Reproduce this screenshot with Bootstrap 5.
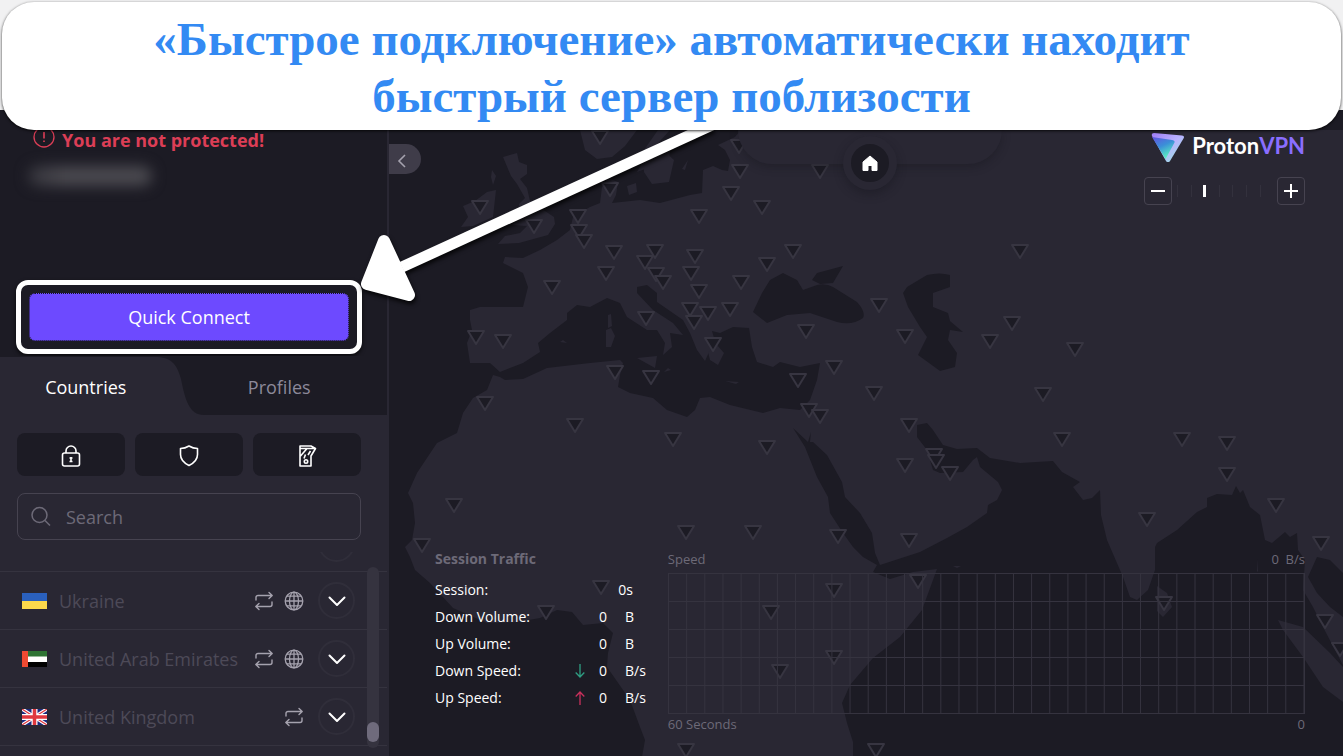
<!DOCTYPE html>
<html lang="ru">
<head>
<meta charset="utf-8">
<meta name="viewport" content="width=device-width, initial-scale=1">
<title>ProtonVPN</title>
<link href="https://cdn.jsdelivr.net/npm/bootstrap@5.3.0/dist/css/bootstrap.min.css" rel="stylesheet">
<style>
  :root { --sea:#1c1b24; --land:#292733; --line:#35333f; --muted:#6d6a78; --dim:#4d4a58; --accent:#6d4aff; }
  body { background:var(--sea); color:#fff; font-family:"Open Sans","Noto Sans",sans-serif; font-size:18px; line-height:24px; }
  .app-shell { padding-top:130px; }
  .backdrop { position:absolute; inset:0 0 auto 0; height:110px; background:#f1f1f2; }
  .callout { position:absolute; top:2px; left:2px; right:2px; padding:9px 24px 5px; border-radius:32px; background:#fff; color:#338af3;
    font:bold 47px/57px "Liberation Serif",serif; box-shadow:0 1px 3px rgba(0,0,0,.8); z-index:5; }
  .callout-arrow { position:absolute; left:340px; top:126px; z-index:4; filter:drop-shadow(1px 3px 2px rgba(0,0,0,.8)); }
  .side { width:389px; border-right:2px solid var(--land); background:var(--sea); }
  .side-pad { padding-left:17px; padding-right:26px; }
  .status-text { color:#dc3e56; font-weight:700; line-height:20px; padding-left:32px; gap:6px; }
  .ip-smudge { width:124px; height:20px; margin:16px 0 0 28px; border-radius:10px; background:linear-gradient(90deg,#35343c,#4b4a50 30%,#4b4a50); filter:blur(7px); }
  .quick-area { padding:94px 25px 0 16px; }
  .highlight-box { border:5px solid #fff; border-radius:12px; padding:8px; box-shadow:0 2px 4px rgba(0,0,0,.7); }
  .btn-quick { height:48px; border:1px dotted #15141c; border-radius:6px; background:var(--accent); color:#fff; font-size:18px; font-weight:500; }
  .btn-quick:hover { background:#7c5cff; color:#fff; }
  .tabs { height:59px; margin-top:2px; background:var(--sea); }
  .tab-shape { position:absolute; left:0; top:0; }
  .tab-link { color:#8c899a; background:none; border:0; padding:2px 22px 0 0; }
  .tab-link.active { color:#fff; }
  .panel-body { background:var(--land); padding-top:18px; }
  .filter-row { gap:10px; }
  .btn-filter { flex:1 1 0; height:43px; border:0; border-radius:8px; background:var(--sea); color:#fff; }
  .search-box { height:47px; margin:17px 26px 0 17px; padding:0 12px; gap:14px; border:1px solid #464350; border-radius:8px; color:var(--muted); }
  .search-box input { background:none; border:0; outline:0; color:#fff; min-width:0; }
  .search-box input::placeholder { color:var(--muted); opacity:1; }
  .server-list { margin-top:12px; }
  .server-row { height:58px; border-bottom:1px solid var(--line); padding:0 32px 0 22px; color:var(--dim); }
  .server-row.cut { height:20px; overflow:hidden; align-items:flex-end; padding-bottom:9px; }
  .server-row svg { color:#a5a2ae; flex:none; }
  .server-name { padding-left:12px; }
  .row-tools { gap:10px; margin-right:14px; }
  .btn-more { width:37px; height:37px; flex:none; border:2px solid #302e3a; border-radius:50%; background:none; padding:0; display:flex; align-items:center; justify-content:center; }
  .server-row .btn-more svg { color:#fff; }
  .scroll-track { position:absolute; top:15px; right:8px; width:12px; height:181px; border-radius:6px; background:#35333f; }
  .scroll-thumb { position:absolute; bottom:6px; width:12px; height:20px; border-radius:6px; background:#6f6b7c; }
  .map-area { background:var(--sea); overflow:hidden; padding-right:38px; }
  .world { position:absolute; left:0; top:-130px; width:100%; height:calc(100% + 130px); }
  .btn-collapse { position:absolute; left:-1px; top:14px; width:33px; height:30px; border:0; border-radius:0 15px 15px 0; background:#3f3c49; color:#a5a2ae; padding:0 6px 0 0; }
  .home-dock { position:absolute; left:calc(50% + 4px); top:0; width:264px; height:34px; margin-left:-132px; border-radius:0 0 40px 40px; background:var(--land); box-shadow:0 3px 8px rgba(20,19,27,.35); }
  .btn-home { position:absolute; left:50%; top:6px; width:54px; height:54px; margin-left:-27px; border:8px solid var(--land); border-radius:50%; background:var(--sea); padding:0; display:flex; align-items:center; justify-content:center; box-shadow:0 4px 10px rgba(20,19,27,.4); }
  .brand { font:bold 22px/32px Lato,sans-serif; color:#fff; }
  .brand span { color:#8a6eff; }
  .brand svg { margin-right:7px; }
  .zoom-bar { margin-top:15px; }
  .btn-zoom { width:28px; height:28px; border:1px solid #464350; border-radius:4px; background:none; color:#fff; padding:0; display:flex; align-items:center; justify-content:center; }
  .zoom-range { appearance:none; width:97px; height:12px; margin:0 4px; background:repeating-linear-gradient(90deg,transparent 0 1px,#33313d 1px 2px,transparent 2px calc(100%/7)); }
  .zoom-range::-webkit-slider-thumb { appearance:none; width:3px; height:12px; background:#fff; }
  .stats { font-size:14px; line-height:20px; }
  .stats-title { color:var(--muted); font-weight:700; margin-bottom:7px; }
  .session-table th { width:134px; font-weight:400; }
  .session-table td, .session-table th { height:27px; padding:0; }
  .arrow-cell { width:22px; }
  .session-table .num-cell { width:24px; text-align:center; }
  .session-table .unit-cell { padding-left:10px; }
  .session-table .time-cell { padding-right:13px; text-align:right; }
  .chart-text { color:var(--muted); font-size:13px; line-height:20px; }
  .chart-grid { height:141px; border-right:1px solid var(--line); border-bottom:1px solid var(--line);
    background-image:linear-gradient(90deg,var(--line) 1px,transparent 1px),linear-gradient(var(--line) 1px,transparent 1px);
    background-size:calc(100%/35) 100%,100% 28px; }
  .bottom-stats { padding:0 0 22px 46px; gap:22px; }
</style>
</head>
<body>
<svg class="d-none" xmlns="http://www.w3.org/2000/svg">
  <symbol id="i-swap" viewBox="0 0 20 20"><path d="M2 9V6.500a2 2 0 0 1 2-2h14M15 1.500l3.200 3-3.200 3M18 11v2.500a2 2 0 0 1-2 2H2M5 12.500l-3.200 3 3.200 3" fill="none" stroke="currentColor" stroke-width="1.400" stroke-linecap="round" stroke-linejoin="round"/></symbol>
  <symbol id="i-globe" viewBox="0 0 20 20"><g fill="none" stroke="currentColor" stroke-width="1.300"><circle cx="10" cy="10" r="8.800"/><ellipse cx="10" cy="10" rx="4.500" ry="8.800"/><path d="M10 1.200v17.600M1.200 10h17.600M2.700 5.200h14.600M2.700 14.800h14.600"/></g></symbol>
  <symbol id="i-down" viewBox="0 0 18 18"><path d="M1.500 5.500 9 13l7.500-7.500" fill="none" stroke="currentColor" stroke-width="2" stroke-linecap="round" stroke-linejoin="round"/></symbol>
</svg>

<div class="backdrop"></div>
<h1 class="callout text-center m-0">«Быстрое подключение» автоматически находит<br>быстрый сервер поблизости</h1>
<svg class="callout-arrow" width="400" height="190" viewBox="340 126 400 190" aria-hidden="true">
  <path d="M402 267 712 125" stroke="#fff" stroke-width="11"/>
  <path d="M367 284 384 241 409 295Z" fill="#fff" stroke="#fff" stroke-width="12" stroke-linejoin="round"/>
</svg>

<div class="app-shell d-flex min-vh-100">
  <aside class="side d-flex flex-column flex-shrink-0">
    <div class="d-flex align-items-center status-text">
      <svg width="24" height="20" viewBox="0 0 24 20" fill="none" stroke="#dc3e56" stroke-width="1.300"><circle cx="12" cy="7" r="10"/><path d="M12 2v6.500M12 10.500v1.500" stroke-width="1.600"/></svg>
      You are not protected!
    </div>
    <div class="ip-smudge"></div>
    <div class="quick-area"><div class="highlight-box"><button class="btn btn-quick w-100" type="button">Quick Connect</button></div></div>

    <div class="tabs position-relative d-flex" role="tablist">
      <svg class="tab-shape" width="204" height="59" viewBox="0 0 204 59"><path d="M0 1h155c16 0 22 7 26 22 4 20 8 36 23 36H0Z" fill="#292733"/></svg>
      <button class="tab-link active position-relative w-50" role="tab" aria-selected="true" type="button">Countries</button>
      <button class="tab-link w-50" role="tab" aria-selected="false" type="button">Profiles</button>
    </div>

    <div class="panel-body flex-grow-1 d-flex flex-column">
      <div class="filter-row side-pad d-flex">
        <button class="btn-filter" type="button" aria-label="Secure Core"><svg width="22" height="24" viewBox="0 0 22 24" fill="none" stroke="currentColor" stroke-width="1.600"><rect x="2.500" y="9" width="17" height="13" rx="2"/><path d="M6 9V7a5 5 0 0 1 10 0v2M11 13v5M9.500 14h3M9.500 17.500h3"/></svg></button>
        <button class="btn-filter" type="button" aria-label="NetShield"><svg width="20" height="24" viewBox="0 0 20 24" fill="none" stroke="currentColor" stroke-width="1.600" stroke-linejoin="round"><path d="M1.500 4.500Q6 4.500 10 2q4 2.500 8.500 2.500v6C18.500 16 14 19.500 10 21.500 6 19.500 1.500 16 1.500 10.500Z"/></svg></button>
        <button class="btn-filter" type="button" aria-label="Kill Switch"><svg width="20" height="24" viewBox="0 0 20 24" fill="none" stroke="currentColor" stroke-width="1.600" stroke-linejoin="round"><path d="M3 2v20h11V12l4.500-7.500L14 2ZM3 4.500h15M3.500 12 10 4.500M7 14.500l1.500-4M11 11l2.500-4"/><circle cx="9" cy="17.500" r="1.700"/></svg></button>
      </div>
      <label class="search-box d-flex align-items-center">
        <svg width="22" height="22" viewBox="0 0 22 22" fill="none" stroke="currentColor" stroke-width="1.500"><circle cx="9.500" cy="9" r="7.500"/><path d="m15 14.500 5 5"/></svg>
        <input class="flex-fill p-0" type="search" placeholder="Search" aria-label="Search">
      </label>
      <div class="server-list position-relative">
        <div class="server-row cut d-flex"><span class="flex-fill"></span><span class="btn-more"></span></div>
        <div class="server-row d-flex align-items-center">
          <svg width="25" height="16" viewBox="0 0 25 16"><path fill="#2a60bd" d="M0 0h25v8H0z"/><path fill="#fbd94b" d="M0 8h25v8H0z"/></svg>
          <span class="server-name flex-fill">Ukraine</span>
          <span class="row-tools d-flex"><svg width="20" height="20"><use href="#i-swap"/></svg><svg width="20" height="20"><use href="#i-globe"/></svg></span>
          <button class="btn-more" type="button" aria-label="Ukraine"><svg width="18" height="18"><use href="#i-down"/></svg></button>
        </div>
        <div class="server-row d-flex align-items-center">
          <svg width="25" height="16" viewBox="0 0 25 16"><path fill="#2f7434" d="M0 0h25v6H0z"/><path fill="#fff" d="M0 5.500h25v5.500H0z"/><path d="M0 11h25v5H0z"/><path fill="#ef4a32" d="M0 0h6v16H0z"/></svg>
          <span class="server-name flex-fill text-nowrap">United Arab Emirates</span>
          <span class="row-tools d-flex"><svg width="20" height="20"><use href="#i-swap"/></svg><svg width="20" height="20"><use href="#i-globe"/></svg></span>
          <button class="btn-more" type="button" aria-label="United Arab Emirates"><svg width="18" height="18"><use href="#i-down"/></svg></button>
        </div>
        <div class="server-row d-flex align-items-center">
          <svg width="25" height="16" viewBox="0 0 25 16"><path fill="#1b2a7d" d="M0 0h25v16H0z"/><path d="m0 0 25 16M25 0 0 16" stroke="#fff" stroke-width="3.500"/><path d="m0 0 25 16M25 0 0 16" stroke="#e0383e" stroke-width="1.200"/><path d="M12.500 0v16M0 8h25" stroke="#fff" stroke-width="6"/><path d="M12.500 0v16M0 8h25" stroke="#e0383e" stroke-width="3.500"/></svg>
          <span class="server-name flex-fill">United Kingdom</span>
          <span class="row-tools d-flex"><svg width="20" height="20"><use href="#i-swap"/></svg></span>
          <button class="btn-more" type="button" aria-label="United Kingdom"><svg width="18" height="18"><use href="#i-down"/></svg></button>
        </div>
        <div class="scroll-track"><div class="scroll-thumb"></div></div>
      </div>
    </div>
  </aside>

  <main class="map-area position-relative flex-grow-1 d-flex flex-column">
    <svg class="world" viewBox="389 0 954 756" preserveAspectRatio="xMinYMin slice" aria-hidden="true">
      <g fill="#292733">
        <path d="M570 230L573 217 590 207 600 203 602 187 608 178 618 182 616 195 612 203 640 200 660 203 690 195 702 193 703 170 713 166 722 170 728 171 730 160 725 150 718 145 735 137 745 125 1343 125V573L1330 560 1317 557 1308 577 1317 593 1330 607 1343 617V665L1335 650 1323 627 1313 607 1303 590 1305 560 1298 550 1297 533 1290 537 1285 532 1272 543 1265 540 1260 515 1250 507 1243 490 1240 493 1236 486 1232 495 1217 494 1207 498V507L1197 512 1177 530 1157 543 1155 547V570L1148 590 1137 600 1130 597 1123 577 1107 540 1101 515 1100 490 1092 498 1083 500 1073 487 1080 482 1062 472 1053 461 1020 463 990 458 977 448 957 449 943 445 933 430 927 423 917 425V437L927 450 933 470 940 473 963 472 973 460 977 457 980 467 998 482 1002 490 997 500 988 505 987 513 967 527 947 538 920 552 880 565 875 553 872 533 860 513 845 497 842 482 827 455 813 442 808 442 793 428 805 447 817 477 828 497 830 513 843 533 853 547 863 557 877 565 873 572 890 579 913 572 937 569 933 580 922 610 900 637 873 658 850 685 842 703 847 723 853 742V757H642L645 740 640 727 630 700 607 667 608 653 613 633 603 623 583 625 572 612 557 610 540 618 517 622 487 623 453 608 430 583 415 570 410 557 405 547 412 540 415 523 413 503 408 493 417 473 437 443 457 433 463 413 473 398 487 390 493 375 500 377 505 380 523 379 547 368 590 363 620 360 623 363 620 375 618 387 630 393 653 398 667 410 687 417 695 410 700 398 710 397 730 405 763 413 780 408 800 410 810 400 817 380 820 363 800 367 780 362 773 367 757 362 752 347 749 328 733 327 720 333 712 331 716 345 709 352 705 361 697 350 690 333 683 320 657 302 657 293 647 285 637 287V293L653 310 673 323 683 335 670 333 672 347 663 355 665 343 657 330 647 330 627 317 620 303 607 298 590 307 577 305 567 313V320L550 333 538 343 540 352 523 363 500 372 490 363 470 363 467 343 472 330 470 320V310L480 307 523 307 528 287 523 273 503 263 505 257 523 258 540 250 557 240Z"/>
        <path d="M580 130l5 20 12 9 15-2 13-11 12-16zM650 152l20-22h-12l-14 20zM637 172l32-12 1-9 -24 5zM644 172l8 12 17-2 5-22-10-9-20 14zM682 169l6-9-3 10zM627 186l9-3 1 9-8 3z"/>
        <path d="M503 157l14-4 2 9 8 3v9l-7 5 7 9 3 13 24 16 1 7-7 11-29 8-21 1 7-8 15-3 7-7-15-1 8-8-1-13 6-6-8-14-6-8zM487 192l9-2-3 27-20 9-12 1 7-10-5-11 12-5zM492 170l4 6-3 9-2-8z"/>
        <path d="M637 358l20-2-2 12zM606 330l5-2 4 8-4 11h-5zM608 315l3-1 1 12-4 2zM560 342l3-2 4 3zM725 381l14 1-3 2zM708 352l9-7 7 8-6 12-8-5zM1157 586l10 7 5 14-9 10-6-6zM1278 620l25 7 27 26 13 14v35l-20-15-20-30-20-27zM664 372l4-4 3 2z"/>
        <path d="M1257 559l1 12-1 1zM1280 641l4 2zM1293 650l4 7zM953 566h8l-4 2z"/>
      </g>
      <g fill="#1c1b24">
        <path d="M753 312L762 293 770 280 783 273 797 280 803 290 817 285Q826 283 833 287L857 302Q866 312 863 318 852 326 837 322L810 313 787 315 767 323ZM812 280L817 273 843 266 833 283 820 284Z"/>
        <path d="M903 293L907 287 927 275Q940 272 950 275V287L933 293V307L948 313 950 321 963 332 950 330 948 340 957 353 955 367 940 371 918 355 927 337 920 327 908 307ZM808 442l3-10-1 10z"/>
      </g>
      <g id="pins" fill="#1c1b24" stroke="#373541" stroke-width="2" stroke-linejoin="round"></g>
    </svg>

    <button class="btn-collapse" type="button" aria-label="Collapse"><svg width="10" height="16" viewBox="0 0 10 16" fill="none" stroke="currentColor" stroke-width="1.600"><path d="M8 2 2 8l6 6"/></svg></button>
    <div class="home-dock"><button class="btn-home" type="button" aria-label="Home"><svg width="16" height="17" viewBox="0 0 16 17"><path d="M8 1 1 7v8.500h5v-5h4v5h5V7Z" fill="#fff" stroke="#fff" stroke-linejoin="round"/></svg></button></div>

    <div class="position-relative align-self-end d-flex flex-column">
      <div class="brand d-flex align-items-center justify-content-end">
        <svg width="34" height="32" viewBox="0 0 34 32"><defs><linearGradient id="g1" x1="0" y1="0" x2="1" y2="1"><stop stop-color="#9f7cf5"/><stop offset=".5" stop-color="#b9b2ff"/><stop offset="1" stop-color="#8ff0d8"/></linearGradient><linearGradient id="g2" x1="0" y1="0" x2="0.500" y2="1"><stop stop-color="#6450e0"/><stop offset=".5" stop-color="#3b8fd8"/><stop offset="1" stop-color="#5af0c0"/></linearGradient></defs><path d="M3 3 31 5.500q3 .5 1.500 3L19 31q-2 3-4 0L1 6Q0 3 3 3Z" fill="url(#g1)"/><path d="M1 7 21 10q4 .5 2 3.500L14.500 29Z" fill="url(#g2)"/></svg>
        Proton<span>VPN</span>
      </div>
      <div class="zoom-bar d-flex align-items-center justify-content-end">
        <button class="btn-zoom" type="button" aria-label="Zoom out"><svg width="16" height="16" stroke="currentColor" stroke-width="2"><path d="M1 8h14"/></svg></button>
        <input class="zoom-range" type="range" min="0" max="7" value="2" aria-label="Zoom">
        <button class="btn-zoom" type="button" aria-label="Zoom in"><svg width="16" height="16" stroke="currentColor" stroke-width="2"><path d="M1 8h14M8 1v14"/></svg></button>
      </div>
    </div>

    <div class="bottom-stats position-relative mt-auto d-flex align-items-start">
      <section class="stats">
        <div class="stats-title">Session Traffic</div>
        <table class="session-table">
          <tr><th scope="row">Session:</th><td></td><td colspan="2" class="time-cell">0s</td></tr>
          <tr><th scope="row">Down Volume:</th><td class="arrow-cell"></td><td class="num-cell">0</td><td class="unit-cell">B</td></tr>
          <tr><th scope="row">Up Volume:</th><td></td><td class="num-cell">0</td><td class="unit-cell">B</td></tr>
          <tr><th scope="row">Down Speed:</th><td><svg class="d-block mx-auto" width="10" height="14" fill="none" stroke="#2f9e83" stroke-width="1.300"><path d="M5 0v13M.700 8.500 5 13l4.300-4.500"/></svg></td><td class="num-cell">0</td><td class="unit-cell">B/s</td></tr>
          <tr><th scope="row">Up Speed:</th><td><svg class="d-block mx-auto" width="10" height="14" fill="none" stroke="#c9305c" stroke-width="1.300"><path d="M5 14V1M.700 5.500 5 1l4.300 4.500"/></svg></td><td class="num-cell">0</td><td class="unit-cell">B/s</td></tr>
        </table>
      </section>
      <section class="chart-text flex-fill">
        <div class="d-flex justify-content-between"><span>Speed</span><span>0&nbsp; B/s</span></div>
        <div class="chart-grid mt-1"></div>
        <div class="d-flex justify-content-between"><span>60 Seconds</span><span>0</span></div>
      </section>
    </div>
  </main>
</div>

<script>
  // server pins: centre of each triangle on the map canvas
  const pins = [[480,207],[534,226],[578,216],[579,231],[584,241],[699,216],[614,252],[655,251],[645,262],[606,273],[656,274],[663,282],[695,256],[691,273],[552,287],[699,291],[646,318],[690,309],[708,313],[694,322],[730,309],[713,344],[741,282],[767,264],[793,251],[731,193],[740,171],[739,146],[762,207],[820,171],[600,137],[610,189],[476,337],[503,341],[615,372],[651,377],[485,403],[575,425],[673,439],[454,505],[422,545],[686,532],[601,587],[546,612],[753,532],[838,536],[806,331],[834,367],[798,380],[809,410],[820,416],[767,447],[874,393],[879,305],[905,336],[909,425],[905,465],[934,455],[936,461],[950,473],[909,540],[1020,251],[1012,323],[990,341],[1075,349],[1043,394],[1062,439],[1182,439],[1227,443],[1227,474],[1276,505],[1147,519],[1321,543],[1164,603],[1325,621],[1340,649],[771,612],[834,590],[834,657],[780,671],[918,581],[686,750],[876,750]];
  document.getElementById('pins').innerHTML = pins.map(([x, y]) => `<path d="M${x - 8} ${y - 6}h16l-8 13z"/>`).join('');
</script>
<script src="https://cdn.jsdelivr.net/npm/bootstrap@5.3.0/dist/js/bootstrap.bundle.min.js"></script>
</body>
</html>
